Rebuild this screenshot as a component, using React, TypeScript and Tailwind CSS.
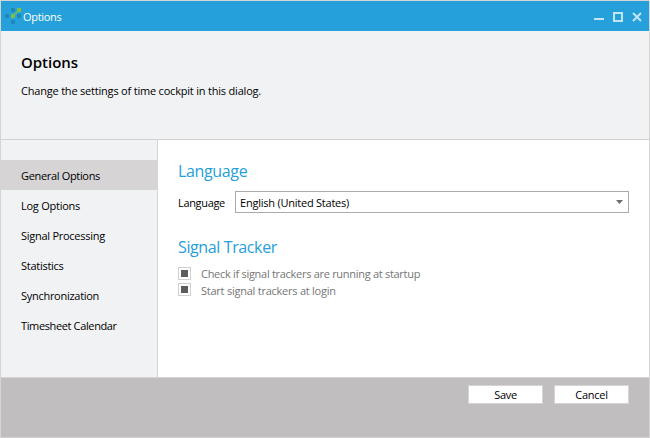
const navItems = [
  { label: 'General Options', tracking: 'tracking-[-0.33px]' },
  { label: 'Log Options', tracking: 'tracking-[-0.25px]' },
  { label: 'Signal Processing', tracking: 'tracking-[-0.27px]' },
  { label: 'Statistics', tracking: 'tracking-[-0.27px]' },
  { label: 'Synchronization', tracking: 'tracking-[-0.28px]' },
  { label: 'Timesheet Calendar', tracking: 'tracking-[-0.37px]' },
];

function Logo() {
  return (
    <svg width="16" height="16" viewBox="0 0 16 16" className="shrink-0">
      <g fill="#1f86b8">
        <rect x="6" y="0" width="4" height="4" rx="1" />
        <rect x="0" y="6" width="4" height="4" rx="1" />
        <rect x="12" y="6" width="4" height="4" rx="1" />
        <rect x="6" y="12" width="4" height="4" rx="1" />
      </g>
      <path d="M9 6l3-3 1 1-3 3z" fill="#7cc142" />
      <rect x="6" y="6" width="4" height="4" rx="0.5" fill="#7cc142" />
      <rect x="12" y="0" width="4" height="4" rx="0.5" fill="#7cc142" />
    </svg>
  );
}

function TitleBar() {
  return (
    <div className="flex h-[30px] shrink-0 items-center bg-[#26a0da] pl-1 pr-[6px] text-white">
      <Logo />
      <span className="ml-[2px] mt-px text-[11px] leading-[15px] tracking-[-0.3px]">Options</span>
      <svg width="49" height="12" viewBox="0 0 49 12" className="ml-auto" fill="none" stroke="#c2e5f6" strokeWidth="2">
        <path d="M0 9h10" />
        <rect x="20" y="3" width="8" height="8" />
        <path d="M39 3l8 8M47 3l-8 8" />
      </svg>
    </div>
  );
}

function Box() {
  return (
    <span className="flex h-[13px] w-[13px] items-center justify-center border border-[#cfcfcf] bg-white">
      <span className="h-[7px] w-[7px] bg-[#5c5c5c]" />
    </span>
  );
}

export default function App() {
  return (
    <div className="flex h-[438px] w-[650px] flex-col overflow-hidden whitespace-nowrap border border-[#d6d4d5] bg-white font-['Open_Sans','Noto_Sans',sans-serif] text-[11px] text-black">
      <TitleBar />
      <header className="h-[109px] shrink-0 border-b border-[#d0d1d2] bg-[#f1f2f4] pl-5 pt-[21px]">
        <h1 className="text-[15px] font-semibold leading-5 tracking-[-0.02px]">Options</h1>
        <p className="mt-[11px] leading-[15px] tracking-[-0.2px]">Change the settings of time cockpit in this dialog.</p>
      </header>
      <div className="flex h-[237px] shrink-0">
        <nav className="w-[157px] shrink-0 border-r border-[#d6d4d5] bg-[#f1f2f4] pt-5">
          {navItems.map((item, i) => (
            <div
              key={item.label}
              className={`flex h-[30px] items-center pl-5 pt-[2px] ${item.tracking} ${i === 0 ? 'bg-[#d6d4d5]' : ''}`}
            >
              {item.label}
            </div>
          ))}
        </nav>
        <main className="grow pl-5 pr-5 pt-5">
          <h2 className="text-[16px] leading-[22px] tracking-[-0.35px] text-[#26a0da]">Language</h2>
          <div className="mt-[9px] flex h-[22px] items-center">
            <span className="w-[57px] pt-[2px] tracking-[-0.33px]">Language</span>
            <div className="flex h-[22px] grow items-center justify-between border border-[#ababab] pl-1 pr-[5px]">
              <span className="pt-[2px] tracking-[-0.23px]">English (United States)</span>
              <svg width="7" height="4" viewBox="0 0 7 4">
                <path d="M0 0h7L3.500 4z" fill="#6d6d6d" />
              </svg>
            </div>
          </div>
          <h2 className="mt-[23px] text-[16px] leading-[22px] tracking-[-0.38px] text-[#26a0da]">Signal Tracker</h2>
          <div className="mt-[7px] flex gap-[10px]">
            <div className="flex flex-col gap-[3px] pt-[2px]">
              <Box />
              <Box />
            </div>
            <div className="text-[#767676]">
              <div className="leading-[17px] tracking-[-0.29px]">Check if signal trackers are running at startup</div>
              <div className="leading-[17px] tracking-[-0.24px]">Start signal trackers at login</div>
            </div>
          </div>
        </main>
      </div>
      <footer className="flex grow items-start justify-end gap-[11px] border-t border-[#d6d4d5] bg-[#c0bebf] pr-5 pt-[7px]">
        <button className="h-[19px] w-[75px] border border-[#d6d4d5] bg-white leading-[18px] tracking-[-0.3px]">Save</button>
        <button className="h-[19px] w-[75px] border border-[#d6d4d5] bg-white leading-[18px] tracking-[-0.25px]">Cancel</button>
      </footer>
    </div>
  );
}
